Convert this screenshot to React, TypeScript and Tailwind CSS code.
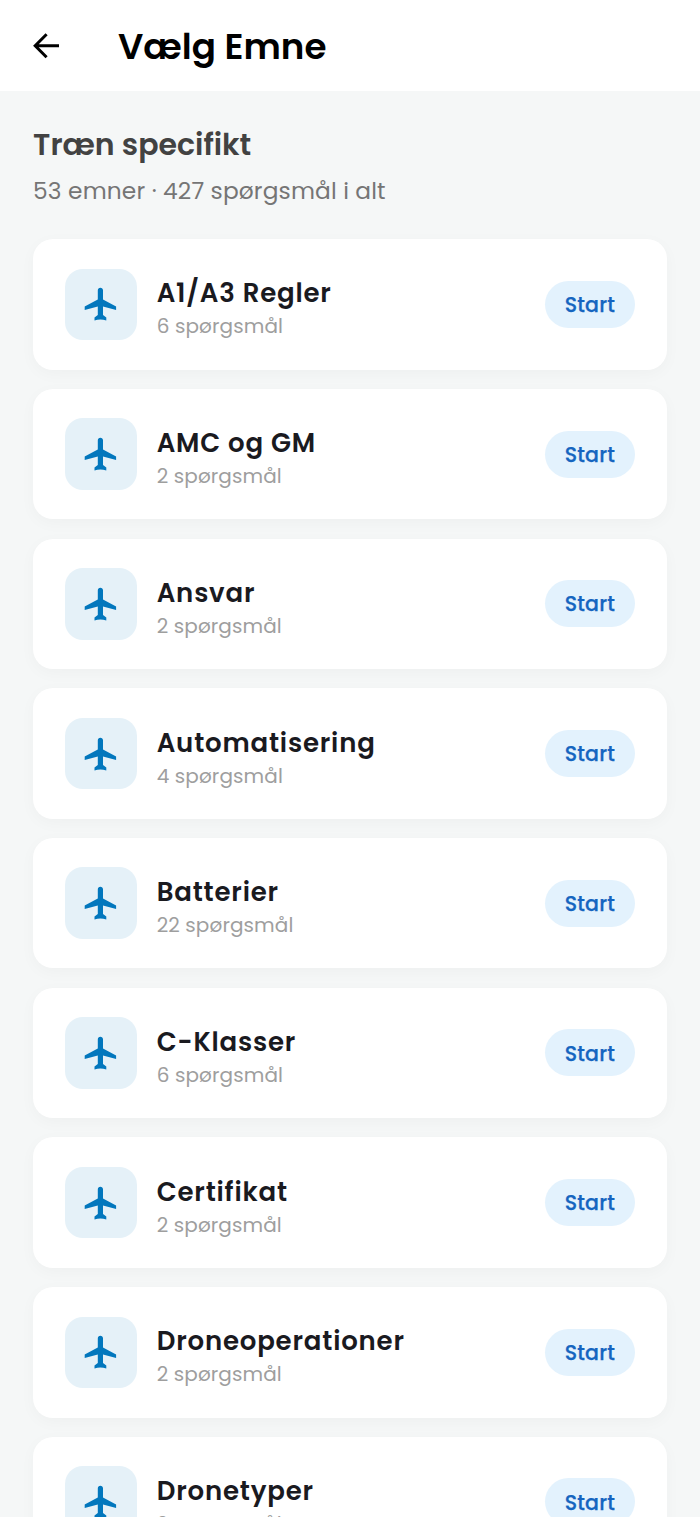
const topics = [
    { name: 'A1/A3 Regler', count: 6 },
    { name: 'AMC og GM', count: 2 },
    { name: 'Ansvar', count: 2 },
    { name: 'Automatisering', count: 4 },
    { name: 'Batterier', count: 22 },
    { name: 'C-Klasser', count: 6 },
    { name: 'Certifikat', count: 2 },
    { name: 'Droneoperationer', count: 2 },
    { name: 'Dronetyper', count: 2 },
];

type Topic = (typeof topics)[number];

function BackIcon() {
    return (
        <svg className="h-[36px] w-[36px]" viewBox="0 0 36 36" fill="none" stroke="currentColor" strokeWidth="3">
            <path d="M18.6 6.2 7.2 17.7l11.4 11.5M7.2 17.7H31" />
        </svg>
    );
}

function PlaneIcon() {
    return (
        <svg className="h-[40px] w-[40px]" viewBox="0 0 40 40" fill="currentColor">
            <path d="M19.4 3.8c-1.5 0-2.6 1.1-2.6 2.6v9.2L3.7 22.4v3.6l13.1-3.6v8.6l-3.3 2.4v3c2-.7 3.9-1 5.9-1s3.9.3 5.9 1v-3L22 31v-8.6L35.1 26v-3.6L22 15.6V6.4c0-1.5-1.1-2.6-2.6-2.6z" />
        </svg>
    );
}

function TopicCard({ topic }: { topic: Topic }) {
    return (
        <div className="flex h-[130.4px] shrink-0 items-center rounded-[20px] bg-white px-[32.5px] shadow-[0_4px_16px_rgba(0,0,0,0.03)]">
            <div className="flex h-[71.6px] w-[71.6px] shrink-0 items-center justify-center rounded-[18px] bg-[#e5f1f8] text-[#0277bd]">
                <PlaneIcon />
            </div>
            <div className="ml-5 flex-1 pt-2 whitespace-nowrap">
                <h3 className="text-[26px] leading-[36px] font-semibold tracking-[0.82px] text-[#1a1a1f]">{topic.name}</h3>
                <p className="text-[20px] leading-[30px] tracking-[0.1px] text-[#9e9e9e]">{topic.count} spørgsmål</p>
            </div>
            <button className="h-[47px] w-[90px] rounded-full bg-[#e3f2fd] pt-[2px] text-[20.5px] font-medium tracking-[0.2px] text-[#1565c0] [-webkit-text-stroke:0.25px_#1565c0]">
                Start
            </button>
        </div>
    );
}

export default function App() {
    return (
        <main className="flex h-[1517px] flex-col overflow-hidden bg-[#f5f7f7] font-['Poppins','Inter',sans-serif]">
            <header className="flex h-[91px] shrink-0 items-center bg-white pl-7 text-black">
                <BackIcon />
                <h1 className="ml-[54px] pt-[2px] text-[35.7px] leading-[50px] font-semibold">Vælg Emne</h1>
            </header>
            <section className="flex flex-col px-[32.6px] pt-[32px] whitespace-nowrap">
                <h2 className="h-[44px] pl-[0.5px] text-[30px] leading-[44px] font-semibold text-[#424242]">Træn specifikt</h2>
                <p className="mt-[6px] h-[36px] pl-[0.5px] text-[23.3px] leading-[36px] tracking-[0.14px] text-[#757575]">53 emner · 427 spørgsmål i alt</p>
                <div className="mt-[30.3px] flex flex-col gap-[19.3px]">
                    {topics.map((topic) => (
                        <TopicCard key={topic.name} topic={topic} />
                    ))}
                </div>
            </section>
        </main>
    );
}
